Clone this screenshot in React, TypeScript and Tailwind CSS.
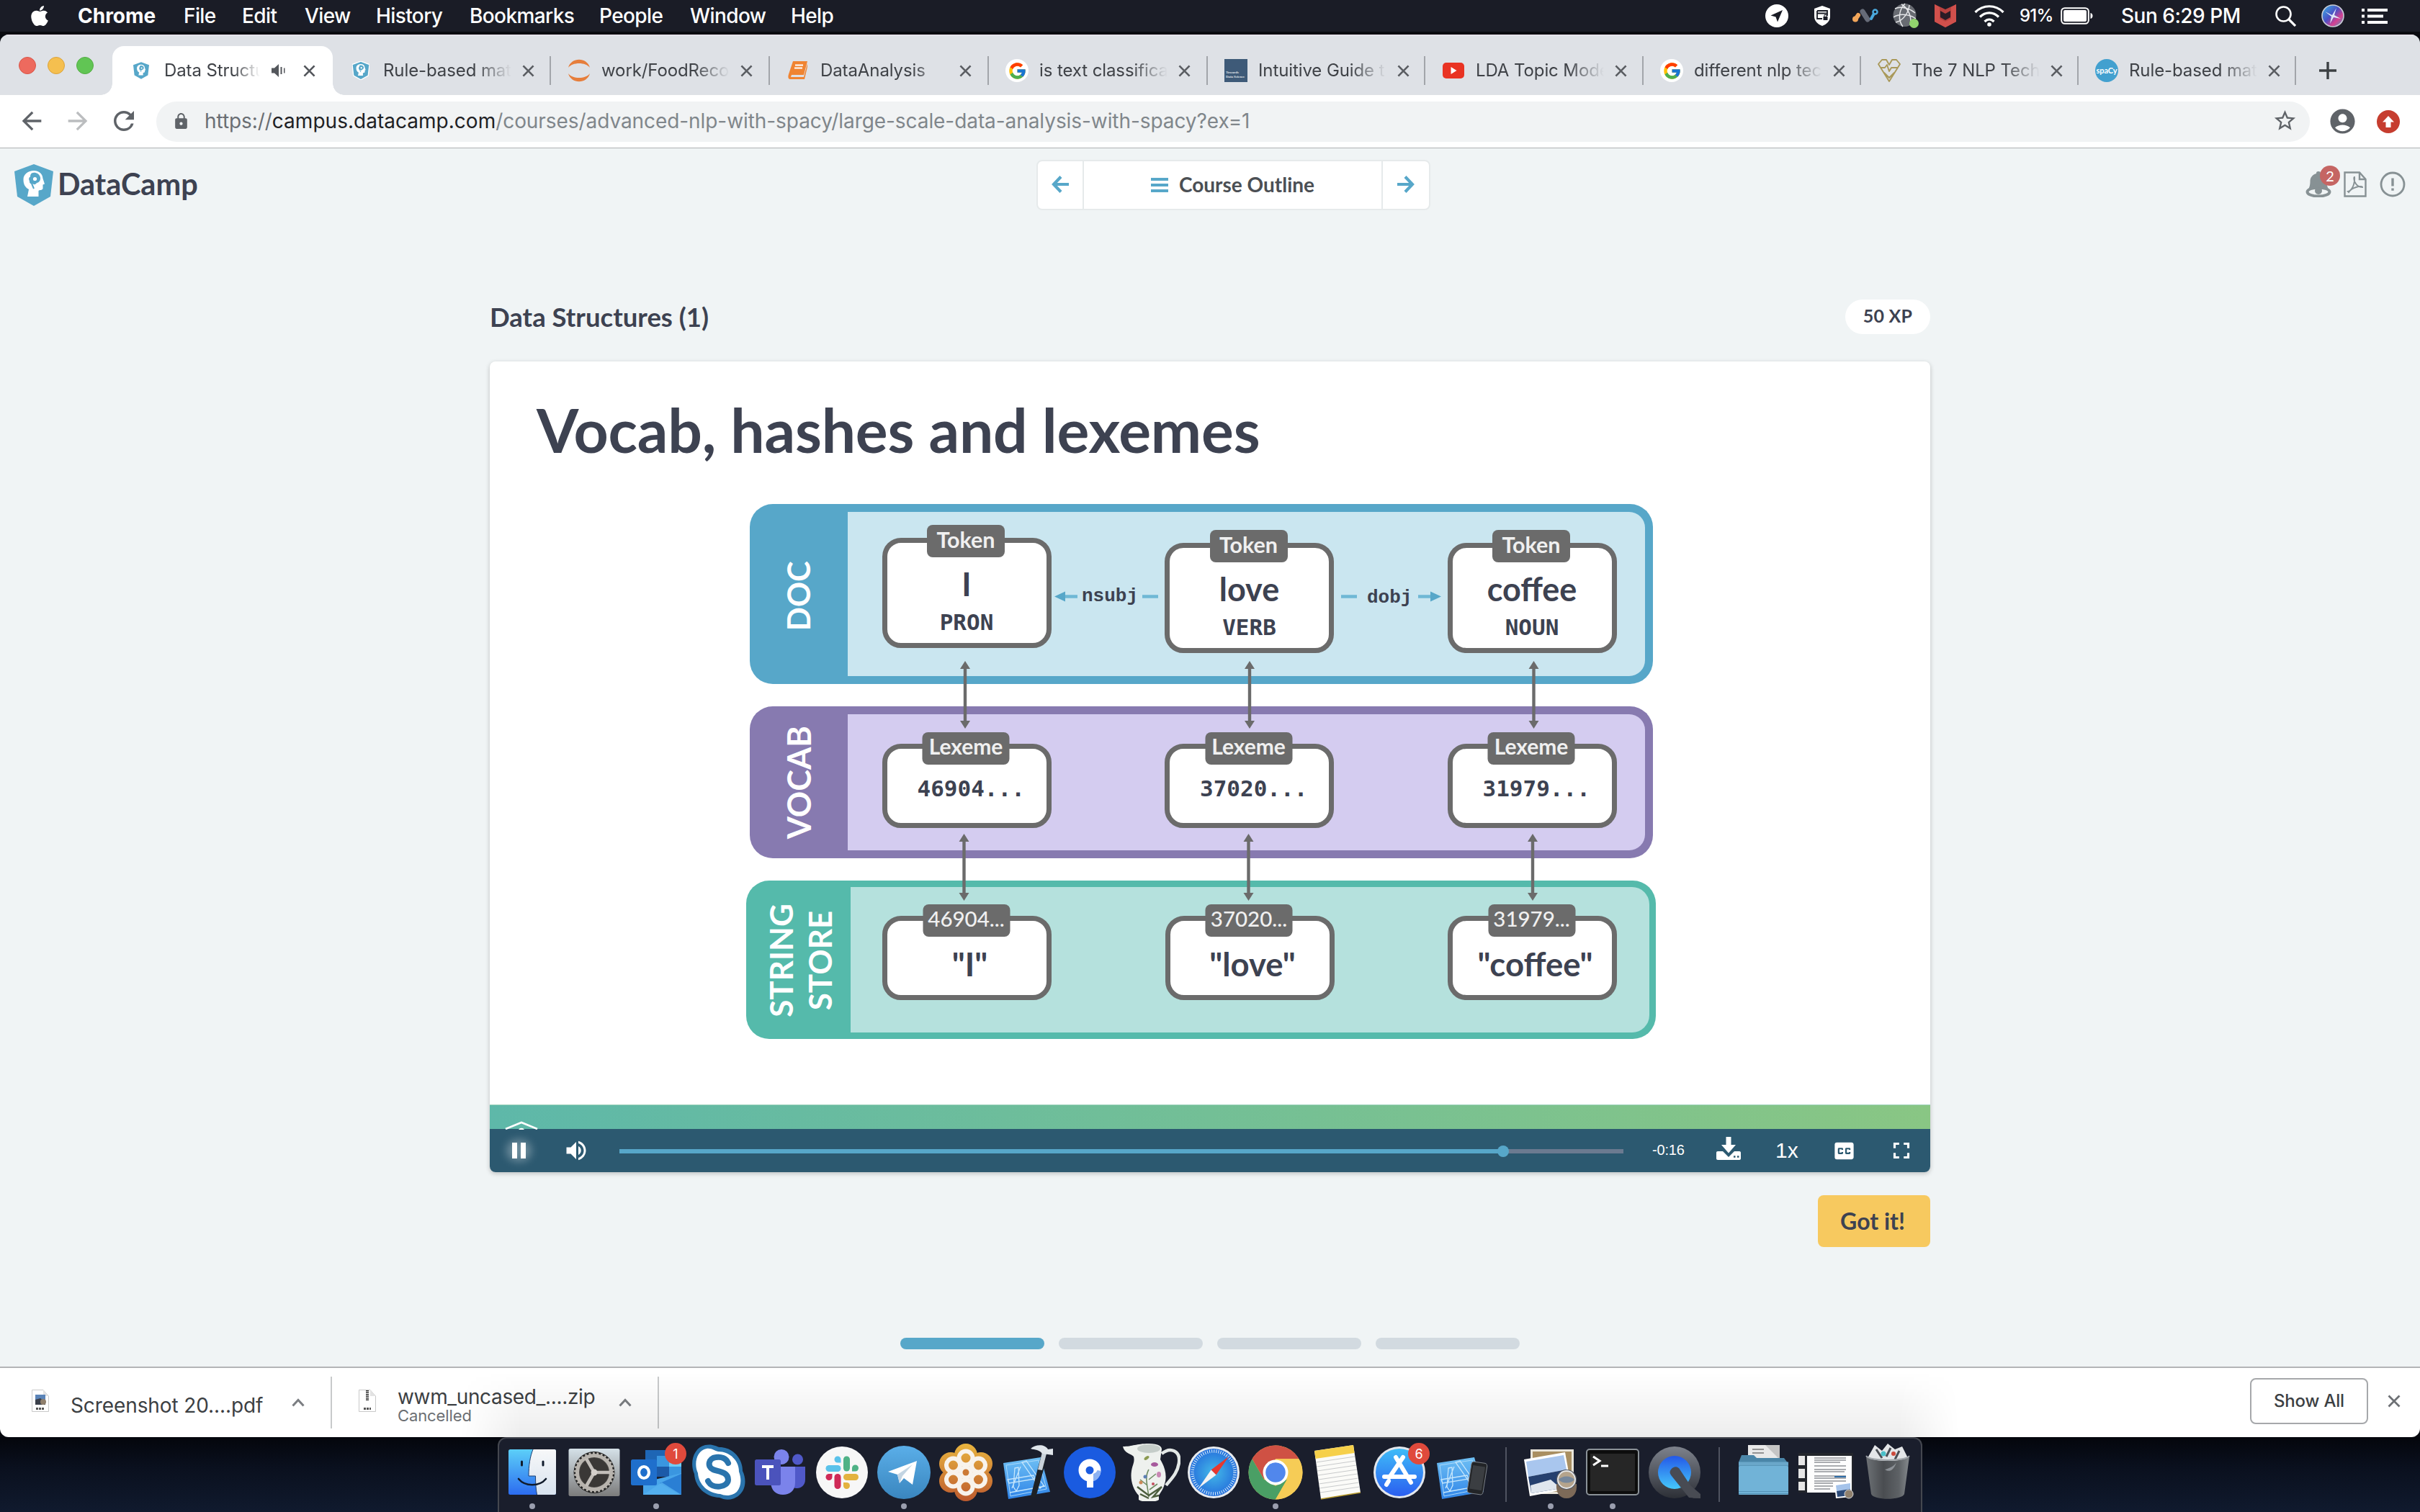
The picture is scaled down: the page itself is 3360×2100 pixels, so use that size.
import type { ReactNode } from "react";
import { FaApple } from "react-icons/fa";
import { FcGoogle } from "react-icons/fc";
import {
  MdAccountCircle,
  MdArrowBack,
  MdArrowForward,
  MdClosedCaption,
  MdFullscreen,
  MdLock,
  MdRefresh,
  MdStarBorder,
  MdVolumeUp,
} from "react-icons/md";

/* ---------- shared marks ---------- */

function Shield({ className, outline = false }: { className: string; outline?: boolean }) {
  return (
    <svg viewBox="0 0 54 58" className={className}>
      <path
        d="M27 0 54 10 50 45 27 58 4 45 0 10Z"
        fill="#57a7c9"
        stroke={outline ? "#ffffff" : "none"}
        strokeWidth={outline ? 3 : 0}
      />
      <path
        d="M18 45 20 35C14 32 12.500 27 12.500 21 12.500 14 19 9 27 9 34 9 39 13 39.500 20L42 27.500 39.500 28.500 39.500 34C38.500 36.500 35 35.500 33.500 37L33.500 45Z"
        fill="#fff"
      />
      <path
        d="M24 12.500c5-2 11 1 12 6 .6 4-2 7-5 7.500-1 2-3.500 3-5 1.500-3 .5-5.500-1-5-4-1.500-2-1-5 1-6 0-2 .5-4 2-5Z"
        fill="#57a7c9"
      />
      <circle cx="28.500" cy="20.500" r="2.600" fill="#fff" />
      <path d="M24 27 27 34" stroke="#57a7c9" strokeWidth="2" />
    </svg>
  );
}

function Cross({ className }: { className: string }) {
  return (
    <svg viewBox="0 0 18 18" className={className} fill="none" stroke="currentColor" strokeWidth="2.800">
      <path d="M1.500 1.500 16.500 16.500M16.500 1.500 1.500 16.500" />
    </svg>
  );
}

/* ---------- menu bar ---------- */

function MenuBar() {
  return (
    <header className="flex h-12 items-center border-b-4 border-[#0a0b10] bg-[#1a1c26] text-[28px] font-medium tracking-[-0.6px] whitespace-nowrap text-white">
      <FaApple className="ml-[39px] mr-[37px] size-8 shrink-0" />
      <nav className="flex">
        <span className="w-[147px] font-bold tracking-normal">Chrome</span>
        <span className="w-[81px]">File</span>
        <span className="w-[87px]">Edit</span>
        <span className="w-[99px]">View</span>
        <span className="w-[130px]">History</span>
        <span className="w-[180px]">Bookmarks</span>
        <span className="w-[126px]">People</span>
        <span className="w-[140px]">Window</span>
        <span>Help</span>
      </nav>
      <div className="ml-auto flex items-center pr-[45px]">
        <svg viewBox="0 0 32 32" className="size-8">
          <circle cx="16" cy="16" r="16" fill="#fff" />
          <path d="M24 8 7.500 15.500 14.500 17.500 17 24.500Z" fill="#1a1c26" />
        </svg>
        <svg viewBox="0 0 24 28" className="ml-[35px] h-7 w-6">
          <path d="M12 0 23 4V15C23 21 18 26 12 28 6 26 1 21 1 15V4Z" fill="#fff" />
          <path d="M5 7H19V14M5 7V18H12M5 10.500H19" stroke="#1a1c26" strokeWidth="1.800" fill="none" />
          <rect x="13.500" y="15" width="6" height="5" fill="#1a1c26" />
          <path d="M15 15V12.500H18V15" stroke="#1a1c26" fill="none" />
        </svg>
        <svg viewBox="0 0 36 20" className="ml-[30px] h-5 w-9">
          <path d="M4 15 8 9" stroke="#f2a65a" strokeWidth="6" strokeLinecap="round" />
          <circle cx="4" cy="14.500" r="4" fill="#f2a65a" />
          <path d="M14 4 21 15" stroke="#666b78" strokeWidth="7" strokeLinecap="round" />
          <path d="M26 14 31 5" stroke="#4aa8dc" strokeWidth="4" strokeLinecap="round" />
          <circle cx="31.500" cy="4.500" r="3" fill="#1a1c26" stroke="#4aa8dc" strokeWidth="2.500" />
        </svg>
        <svg viewBox="0 0 36 36" className="ml-5 size-9">
          <circle cx="16.500" cy="17" r="16" fill="#686b72" />
          <g fill="none" stroke="#e6e7ea" strokeWidth="1.500">
            <path d="M3 8C12 4 24 8 31 14M1 20C10 14 24 16 32 22M17 1C8 10 7 24 14 33M12 2C22 8 27 20 24 31M4 27C14 25 22 14 23 3" />
          </g>
          <circle cx="29.500" cy="28.500" r="6.500" fill="#92d36e" />
        </svg>
        <svg viewBox="0 0 32 32" className="ml-[21px] size-8">
          <path d="M1 0 16 7 31 0V24L16 32 1 24Z" fill="#b9423f" />
          <path d="M1 0 8 4V20L16 24 24 20V4L31 0V24L16 32 1 24Z" fill="#d0504c" />
          <path d="M9 9 16 13 23 9V18L16 22 9 18Z" fill="#2a1c26" />
        </svg>
        <svg viewBox="0 0 42 30" className="ml-6 h-[30px] w-[42px]" fill="none" stroke="#fff" strokeWidth="3.200">
          <path d="M1.500 10C12.500-1 29.500-1 40.500 10M8 16.500C15.500 9 26.500 9 34 16.500M14.500 23C18.500 19 23.500 19 27.500 23" />
          <circle cx="21" cy="27" r="2.800" fill="#fff" stroke="none" />
        </svg>
        <span className="ml-[21px] w-[50px] text-[24px] tracking-[-0.8px]">91%</span>
        <svg viewBox="0 0 45 24" className="ml-[7px] h-6 w-[45px]">
          <rect x="1.200" y="1.200" width="37.600" height="21.600" rx="4.500" fill="none" stroke="#fff" strokeWidth="2" />
          <rect x="4" y="4" width="32" height="16" rx="2" fill="#fff" />
          <path d="M41.500 8C45.500 9 45.500 15 41.500 16Z" fill="#fff" />
        </svg>
        <span className="ml-[39px] w-[169px] tracking-[-0.5px]">Sun 6:29 PM</span>
        <svg viewBox="0 0 29 29" className="ml-[45px] size-[29px]" fill="none" stroke="#fff" strokeWidth="2.600">
          <circle cx="11.500" cy="11.500" r="10" />
          <path d="M18.500 18.500 28 28" strokeWidth="3.200" />
        </svg>
        <svg viewBox="0 0 32 32" className="ml-[35px] size-8">
          <defs>
            <linearGradient id="siri" x1="0" y1="0" x2="1" y2="1">
              <stop offset="0" stopColor="#38b8e8" />
              <stop offset=".45" stopColor="#4a4fc4" />
              <stop offset=".7" stopColor="#d6418f" />
              <stop offset="1" stopColor="#2fa9c8" />
            </linearGradient>
          </defs>
          <circle cx="16" cy="16" r="15" fill="url(#siri)" stroke="#c9ccd6" strokeWidth="1.600" />
          <path d="M5 10 15 15 21 5 18 15 27 20 17 18 12 27 14 17Z" fill="#e9f6ff" opacity=".9" />
        </svg>
        <svg viewBox="0 0 36 21" className="ml-6 h-[21px] w-9">
          <path
            d="M0 2H4M8 2H36M0 10.500H4M8 10.500H30M0 19H4M8 19H36"
            stroke="#fff"
            strokeWidth="4"
          />
        </svg>
      </div>
    </header>
  );
}

/* ---------- tab strip ---------- */

const ShieldIcon = <Shield className="h-[26px] w-6" outline />;

const GoogleIcon = (
  <span className="flex size-8 items-center justify-center rounded-full bg-white">
    <FcGoogle className="size-[27px]" />
  </span>
);

const tabs: { title: string; icon: ReactNode; width: string }[] = [
  { title: "Rule-based mat", icon: ShieldIcon, width: "w-[303px]" },
  {
    title: "work/FoodRecom",
    width: "w-[304px]",
    icon: (
      <svg viewBox="0 0 32 32" className="size-8" fill="#e67e3c">
        <path d="M1 12C5-3 27-3 31 12 25 4 7 4 1 12ZM1 20C7 28 25 28 31 20 27 35 5 35 1 20Z" />
      </svg>
    ),
  },
  {
    title: "DataAnalysis",
    width: "w-[304px]",
    icon: (
      <svg viewBox="0 0 28 26" className="h-[26px] w-7">
        <path d="M7 0H27L22 19H5L4 22H22L27 3V8L23 25H3C0 25 0 21 1 18Z" fill="#f08432" />
        <path d="M10 5.500H21M9 9.500H20" stroke="#fff" strokeWidth="1.800" />
      </svg>
    ),
  },
  { title: "is text classificat", icon: GoogleIcon, width: "w-[304px]" },
  {
    title: "Intuitive Guide t",
    width: "w-[302px]",
    icon: (
      <span className="flex size-8 flex-col justify-end bg-[#3e5a78] pb-1 pl-0.5 font-['Liberation_Serif',serif] text-[5px] leading-[6px] font-bold text-white/80">
        <span>Towards</span>
        <span>Data Science</span>
      </span>
    ),
  },
  {
    title: "LDA Topic Mode",
    width: "w-[303px]",
    icon: (
      <svg viewBox="0 0 30 22" className="h-[22px] w-[30px]">
        <rect width="30" height="22" rx="5" fill="#e93323" />
        <path d="M11.500 6 19.500 11 11.500 16Z" fill="#fff" />
      </svg>
    ),
  },
  { title: "different nlp tech", icon: GoogleIcon, width: "w-[302px]" },
  {
    title: "The 7 NLP Techn",
    width: "w-[302px]",
    icon: (
      <svg viewBox="0 0 32 32" className="size-8" fill="none" stroke="#a9995a" strokeWidth="1.900" strokeLinejoin="round">
        <path d="M16 31 1 7 6 1 12 1 16 8 20 1 26 1 31 7ZM4 12H10L13 8 16 17 19 12H28M9 19 16 26 23 19" />
      </svg>
    ),
  },
  {
    title: "Rule-based mat",
    width: "w-[302px]",
    icon: (
      <span className="flex size-8 items-center justify-center rounded-full bg-[#42a0cf] font-['Lato',sans-serif] text-[11px] font-bold text-white">
        spaCy
      </span>
    ),
  },
];

const fade = "[mask-image:linear-gradient(to_right,black_72%,transparent)]";

function TabStrip() {
  return (
    <div className="flex h-[84px] items-end border-t border-[#f3e9f3] bg-[#dee1e6] text-[24px] tracking-[-0.1px] whitespace-nowrap text-[#3f4247]">
      <div className="flex w-[156px] gap-4 self-start pt-[30px] pl-[26px]">
        <span className="size-6 rounded-full border border-[#d95548] bg-[#ed6a5e]" />
        <span className="size-6 rounded-full border border-[#dba33b] bg-[#f5bf4f]" />
        <span className="size-6 rounded-full border border-[#53ad43] bg-[#61c554]" />
      </div>
      <div className="relative flex h-[68px] w-[306px] items-center rounded-t-[16px] bg-white">
        <span className="absolute bottom-0 -left-4 size-4 bg-[radial-gradient(circle_at_0_0,transparent_15.500px,#fff_16px)]" />
        <span className="absolute -right-4 bottom-0 size-4 bg-[radial-gradient(circle_at_100%_0,transparent_15.500px,#fff_16px)]" />
        <span className="ml-6 flex w-8 justify-center">
          <Shield className="h-6 w-[22px]" />
        </span>
        <span className={"ml-4 w-[133px] overflow-hidden " + fade}>Data Structu</span>
        <svg viewBox="0 0 20 18" className="ml-4 h-[18px] w-5 text-[#54575c]" fill="currentColor">
          <path d="M0 5.500H4L10 0V18L4 12.500H0ZM12.500 4H14.500V14H12.500ZM17 5.500H18.500V12.500H17Z" />
        </svg>
        <Cross className="ml-6 size-[17px] text-[#54575c]" />
      </div>
      {tabs.map((t, i) => (
        <div key={i} className={"flex h-[68px] items-center " + t.width}>
          <span className="ml-[23px] flex w-8 shrink-0 justify-center">{t.icon}</span>
          <span className={"ml-[15px] w-[178px] shrink-0 overflow-hidden " + fade}>{t.title}</span>
          <Cross className="ml-[15px] size-[17px] shrink-0 text-[#5b5e63]" />
          <span className="ml-auto h-10 w-0.5 bg-[#a2a5aa]" />
        </div>
      ))}
      <svg viewBox="0 0 24 24" className="mb-[22px] ml-8 size-6" stroke="#3c4043" strokeWidth="3.400">
        <path d="M12 0V24M0 12H24" />
      </svg>
    </div>
  );
}

function Toolbar() {
  return (
    <div className="flex h-[74px] items-center border-b border-[#aeb1b3] bg-white text-[#5f6368]">
      <MdArrowBack className="-mt-px ml-[24px] size-10" />
      <MdArrowForward className="-mt-px ml-6 size-10 text-[#bbbdbf]" />
      <MdRefresh className="-mt-px ml-[23px] size-[42px]" />
      <div className="ml-6 flex h-14 w-[2990px] items-center rounded-full bg-[#f1f3f4] pr-[17px] pl-[22px]">
        <MdLock className="size-[25px]" />
        <span className="-mt-0.5 ml-[20px] text-[28px] tracking-[-0.07px] whitespace-nowrap text-[#80868b]">
          <span className="text-[#6a6e73]">https://</span>
          <span className="tracking-[0.02px] text-[#202124]">campus.datacamp.com</span>
          /courses/advanced-nlp-with-spacy/large-scale-data-analysis-with-spacy?ex=1
        </span>
        <MdStarBorder className="-mt-0.5 ml-auto size-[35px]" />
      </div>
      <MdAccountCircle className="-mt-px ml-[25px] size-[41px]" />
      <svg viewBox="0 0 32 32" className="ml-[27px] size-8">
        <circle cx="16" cy="16" r="16" fill="#c63d2f" />
        <path d="M16 8 24 16.500H19.500V24H12.500V16.500H8Z" fill="#fff" />
      </svg>
    </div>
  );
}

/* ---------- course page ---------- */

function PageHeader() {
  return (
    <div className="flex h-[100px] font-['Lato',sans-serif] font-bold text-[#3d4251]">
      <div className="flex w-[1439px] items-start pt-[22px] pl-5">
        <Shield className="h-[58px] w-[54px]" />
        <span className="ml-[6px] text-[41.500px] leading-[54px]">DataCamp</span>
      </div>
      <div className="mt-4 flex h-[70px] w-[547px] items-stretch rounded-lg border-2 border-[#e6eaeb] bg-white text-[28px] text-[#4b4f54]">
        <div className="flex w-[64px] items-center justify-center border-r-2 border-[#e6eaeb]">
          <svg viewBox="0 0 24 24" className="-mt-0.5 size-6" fill="none" stroke="#57a7c9" strokeWidth="4.200">
            <path d="M13 1.500 3 12 13 22.500M3 12H24" />
          </svg>
        </div>
        <div className="flex flex-1 items-center justify-center">
          <span className="flex w-6 flex-col gap-1">
            <span className="h-1 bg-[#57a7c9]" />
            <span className="h-1 bg-[#57a7c9]" />
            <span className="h-1 bg-[#57a7c9]" />
          </span>
          <span className="-mt-[3px] ml-[15px]">Course Outline</span>
        </div>
        <div className="flex w-[66px] items-center justify-center border-l-2 border-[#e6eaeb]">
          <svg viewBox="0 0 24 24" className="-mt-0.5 size-6" fill="none" stroke="#57a7c9" strokeWidth="4.200">
            <path d="M11 1.500 21 12 11 22.500M21 12H0" />
          </svg>
        </div>
      </div>
      <div className="mt-8 mr-[20px] ml-auto flex h-9 items-center">
        <div className="relative">
          <svg viewBox="0 0 36 36" className="size-9">
            <path
              d="M18 0C15.500 0 15 1 15 3 9 5 6.500 9 6.500 14 6.500 20 5 23 4 25H32C31 23 29.500 20 29.500 14 29.500 9 27 5 21 3 21 1 20.500 0 18 0Z"
              fill="#879194"
            />
            <ellipse cx="18" cy="28.500" rx="15.500" ry="6" fill="none" stroke="#879194" strokeWidth="4" />
            <circle cx="18" cy="27" r="5" fill="#879194" />
          </svg>
          <span className="absolute -top-2 left-[20px] flex size-7 items-center justify-center rounded-full bg-[#c56563] text-[20px] font-normal text-white">
            2
          </span>
        </div>
        <svg viewBox="0 0 32 36" className="ml-[17px] h-9 w-8" fill="none" stroke="#879194" strokeWidth="2.400">
          <path d="M1.500 1.500H22L30.500 11V34.500H1.500Z" />
          <path d="M22 1.500V11H30.500" />
          <path d="M6 28C11 27 16 18 15 8 13 8 15 22 26 22 26 19 11 22 7 29Z" strokeWidth="1.900" />
        </svg>
        <svg viewBox="0 0 36 36" className="ml-[18px] size-9" fill="none" stroke="#879194">
          <circle cx="18" cy="18" r="16" strokeWidth="2.800" />
          <path d="M18 9.500V20.500M18 23.500V26.800" strokeWidth="3.400" />
        </svg>
      </div>
    </div>
  );
}

function Node({
  tag,
  className,
  tagClass,
  children,
}: {
  tag: string;
  className: string;
  tagClass: string;
  children: ReactNode;
}) {
  return (
    <div
      className={
        "relative flex w-[235px] shrink-0 flex-col rounded-[26px] border-[7px] border-[#6b6b6b] bg-white text-[#3d4251] " +
        className
      }
    >
      <span
        className={
          "absolute left-1/2 -ml-px flex -translate-x-1/2 justify-center rounded-lg bg-[#6b6b6b] text-white/90 " + tagClass
        }
      >
        {tag}
      </span>
      {children}
    </div>
  );
}

const tokens = [
  { word: "I", pos: "PRON", offset: "mt-[36px]" },
  { word: "love", pos: "VERB", offset: "mt-[43px]" },
  { word: "coffee", pos: "NOUN", offset: "mt-[43px]" },
];
const hashes = ["46904...", "37020...", "31979..."];
const upperArrows = [1340, 1735, 2129.5];
const lowerArrows = [1338.5, 1733.5, 2128];

function Diagram() {
  return (
    <div className="relative mt-[53px] ml-[356px] flex h-[744px] w-[1263px] flex-col items-center gap-[31px] font-bold">
      <div className="flex h-[250px] w-[1254px] rounded-[32px] bg-[#57a7c9]">
        <div className="flex w-[136px] items-center justify-center pt-1.5">
          <span className="-rotate-90 text-[43.500px] text-white">DOC</span>
        </div>
        <div className="my-[11px] mr-[11px] flex flex-1 gap-[157.500px] rounded-r-[22px] bg-[#cae6f0] pl-[48px]">
          {tokens.map((t) => (
            <Node
              key={t.pos}
              tag="Token"
              className={"h-[153px] items-center pt-[30px] " + t.offset}
              tagClass="-top-[25px] h-[45px] w-[108px] text-[30.500px] leading-[40px]"
            >
              <span className="text-[45px] leading-[54px]">{t.word}</span>
              <span className="mt-1.5 font-['DejaVu_Sans_Mono',monospace] text-[31px] leading-[40px]">{t.pos}</span>
            </Node>
          ))}
        </div>
      </div>

      <div className="flex h-[211px] w-[1254px] rounded-[32px] bg-[#877ab0]">
        <div className="flex w-[136px] items-center justify-center pl-0.5">
          <span className="-rotate-90 text-[45px] text-white">VOCAB</span>
        </div>
        <div className="my-[11px] mr-[11px] flex flex-1 gap-[157.500px] rounded-r-[22px] bg-[#d4ccf0] pl-[48px]">
          {hashes.map((h) => (
            <Node
              key={h}
              tag="Lexeme"
              className="mt-[41px] h-[117px] pt-[35px] pl-[42px]"
              tagClass="-top-[23px] h-[45px] w-[121px] text-[30px] leading-[39px]"
            >
              <span className="font-['DejaVu_Sans_Mono',monospace] text-[31px] leading-[40px]">{h}</span>
            </Node>
          ))}
        </div>
      </div>

      <div className="flex h-[220px] w-[1263px] rounded-[32px] bg-[#55baab]">
        <div className="flex w-[145px] items-center justify-center pt-0.5 pl-1">
          <span className="-rotate-90 text-center text-[44px] leading-[54px] text-white">
            STRING
            <br />
            STORE
          </span>
        </div>
        <div className="my-[9px] mr-[9px] flex flex-1 gap-[157.500px] rounded-r-[24px] bg-[#b5e1dd] pl-[44px]">
          {hashes.map((h, i) => (
            <Node
              key={h}
              tag={h}
              className="mt-[40px] h-[117px] items-center pt-[33px] pl-2"
              tagClass="-top-[23px] h-[45px] w-[121px] text-[29.500px] leading-[39px] font-medium"
            >
              <span className="text-[45.500px] leading-[54px]">{'"' + tokens[i].word + '"'}</span>
            </Node>
          ))}
        </div>
      </div>

      <svg viewBox="1036 699 1263 744" className="absolute inset-0 h-[744px] w-[1263px]">
        <g stroke="#6b6b6b" strokeWidth="4.400">
          {upperArrows.map((x) => (
            <path key={x} d={`M${x} 926V1002`} />
          ))}
          {lowerArrows.map((x) => (
            <path key={x} d={`M${x} 1166V1241`} />
          ))}
        </g>
        <g fill="#6b6b6b">
          {upperArrows.map((x) => (
            <path key={x} d={`M${x} 917l7 11h-14ZM${x} 1011l7 -11h-14Z`} />
          ))}
          {lowerArrows.map((x) => (
            <path key={x} d={`M${x} 1157l7 11h-14ZM${x} 1250l7 -11h-14Z`} />
          ))}
        </g>
        <path
          d="M1475 827.500H1496M1586 827.500H1608M1862 827.500H1884M1969 827.500H1990"
          stroke="#6fb8d5"
          strokeWidth="4.500"
        />
        <path d="M1464 827.500 1479 820.500V834.500ZM2001 827.500 1986 820.500V834.500Z" fill="#57a7c9" />
      </svg>
      <span className="absolute top-[111px] left-[466px] font-['Liberation_Mono',monospace] text-[26px] leading-[34px]">
        nsubj
      </span>
      <span className="absolute top-[113px] left-[862px] font-['Liberation_Mono',monospace] text-[26px] leading-[34px]">
        dobj
      </span>
    </div>
  );
}

function VideoCard() {
  return (
    <div className="mt-[38px] h-[1126px] overflow-hidden rounded-lg bg-white shadow-[0_2px_6px_rgba(0,0,0,0.22)]">
      <div className="h-[1032px] pt-[45px]">
        <h1 className="pl-[65px] text-[84px] leading-[100px] font-bold tracking-[-0.2px]">Vocab, hashes and lexemes</h1>
        <Diagram />
      </div>
      <div className="h-[34px] border-t border-[#9fd3bd] bg-[linear-gradient(90deg,#5eb8a9,#73bf96_50%,#89c684)]">
        <svg viewBox="0 0 46 12" className="mt-[22px] ml-[21px] h-[12px] w-[46px]" fill="none" stroke="#fff" strokeWidth="2.600">
          <path d="M1 11 23 2 45 11M20 13C21 10.500 25 10.500 26 13" />
        </svg>
      </div>
      <div className="flex h-[60px] items-center bg-[#2c5970] font-['Liberation_Sans',sans-serif] text-white">
        <span className="relative ml-[31px] flex h-[22px] gap-[5px]">
          <span className="absolute -inset-x-2 -inset-y-1 rounded-full bg-white/30 blur-[6px]" />
          <span className="relative w-[7px] bg-white" />
          <span className="relative w-[7px] bg-white" />
        </span>
        <MdVolumeUp className="ml-[52px] size-[36px]" />
        <div className="relative mt-0.5 ml-[42px] flex h-1.5 w-[1394px]">
          <span className="w-[1227px] bg-[#57a7c9]" />
          <span className="flex-1 bg-[#6b7a90]" />
          <span className="absolute -top-[5px] left-[1219px] size-4 rounded-full bg-[#57a7c9]" />
        </div>
        <span className="-mt-0.5 ml-[40px] w-[46px] text-[20px] tracking-[-0.2px]">-0:16</span>
        <svg viewBox="0 0 34 32" className="-mt-1.5 ml-[43px] h-8 w-[34px]" fill="#fff">
          <path d="M13.500 0H20.500V11H27L17 22.500 7 11H13.500Z" />
          <path d="M2 20H9L17 28 25 20H32C33.200 20 34 20.800 34 22V30C34 31.200 33.200 32 32 32H2C.8 32 0 31.200 0 30V22C0 20.800.8 20 2 20Z" />
          <path d="M24 27.500H26.500M29 27.500H31.500" stroke="#2c5970" strokeWidth="2.500" />
        </svg>
        <span className="-mt-0.5 ml-[48px] w-8 text-[30px]">1x</span>
        <MdClosedCaption className="ml-[46px] size-[35px]" />
        <MdFullscreen className="ml-[43px] size-[38px]" />
      </div>
    </div>
  );
}

function CoursePage() {
  return (
    <main className="h-[1692px] overflow-hidden bg-[#f0f4f5]">
      <PageHeader />
      <div className="mx-auto mt-[110px] w-[2000px] font-['Lato',sans-serif] text-[#3d4251]">
        <div className="flex h-12 items-center justify-between font-bold">
          <h2 className="text-[36.500px]">Data Structures (1)</h2>
          <span className="flex h-12 w-[118px] items-center justify-center rounded-full bg-white pb-0.5 text-[25px] tracking-[0.2px]">
            50 XP
          </span>
        </div>
        <VideoCard />
        <div className="mt-8 flex justify-end">
          <button className="h-[72px] w-[156px] rounded-lg bg-[#f7c95f] pr-1 text-[32px] font-bold">Got it!</button>
        </div>
        <div className="mt-[126px] flex justify-center gap-5">
          <span className="h-4 w-[200px] rounded-full bg-[#57a7c9]" />
          <span className="h-4 w-[200px] rounded-full bg-[#d2dae0]" />
          <span className="h-4 w-[200px] rounded-full bg-[#d2dae0]" />
          <span className="h-4 w-[200px] rounded-full bg-[#d2dae0]" />
        </div>
      </div>
    </main>
  );
}

/* ---------- downloads ---------- */

function Caret({ className }: { className: string }) {
  return (
    <svg viewBox="0 0 18 12" className={className} fill="none" stroke="#7b7e82" strokeWidth="3">
      <path d="M1.500 10.500 9 2.500 16.500 10.500" />
    </svg>
  );
}

function DownloadBar() {
  return (
    <footer className="relative flex h-[98px] items-center border-t-2 border-[#b3b4b6] bg-white text-[28px] whitespace-nowrap text-[#3c4043]">
      <div className="absolute bottom-0 left-[640px] h-[90px] w-[2080px] bg-[linear-gradient(to_bottom,transparent,rgba(0,0,0,0.07))] [mask-image:linear-gradient(to_right,transparent,black_4%,black_96%,transparent)]" />
      <div className="flex h-[72px] w-[461px] items-center border-r-2 border-[#c8cacb] pl-[44px]">
        <svg viewBox="0 0 24 31" className="-mt-1.5 h-[31px] w-6">
          <path d="M.5.500H16L23.500 9V30.500H.5Z" fill="#fff" stroke="#c9c9c9" />
          <path d="M16 .5V9H23.500Z" fill="#e3e3e3" />
          <rect x="5" y="7" width="14" height="14" fill="#5b84b8" />
          <path d="M5 14 12 12 19 17V21H5Z" fill="#3a3f4a" />
          <circle cx="16" cy="17" r="4" fill="#8f7f6c" />
          <path d="M6 26.500H18" stroke="#555" strokeWidth="3" strokeDasharray="3 1" />
        </svg>
        <span className="mt-2 ml-[30px] w-[270px] tracking-[-0.1px]">Screenshot 20....pdf</span>
        <Caret className="ml-[37px] h-3 w-[18px]" />
      </div>
      <div className="flex h-[72px] w-[454px] items-center border-r-2 border-[#c8cacb] pl-[37px]">
        <svg viewBox="0 0 24 31" className="-mt-1.5 h-[31px] w-6">
          <path d="M.5.500H16L23.500 9V30.500H.5Z" fill="#fff" stroke="#c9c9c9" />
          <path d="M16 .5V9H23.500Z" fill="#e3e3e3" />
          <path d="M12 1V16" stroke="#333" strokeWidth="4" strokeDasharray="1.500 1" />
          <path d="M7 26.500H17" stroke="#555" strokeWidth="3" strokeDasharray="3 1" />
        </svg>
        <span className="mt-2 ml-[30px] flex w-[278px] flex-col">
          <span className="leading-7 tracking-[-0.35px]">wwm_uncased_....zip</span>
          <span className="text-[22px] leading-6 tracking-[-0.1px] text-[#6c6f73]">Cancelled</span>
        </span>
        <Caret className="ml-[29px] h-3 w-[18px]" />
      </div>
      <button className="-mt-1 ml-auto h-[64px] w-[164px] rounded-lg border-2 border-[#a6a8ab] text-[24px] font-medium tracking-[-0.2px]">
        Show All
      </button>
      <Cross className="-mt-1 mr-[27px] ml-[27px] size-[18px] text-[#6d7074]" />
    </footer>
  );
}

/* ---------- dock ---------- */

const Blueprint = (
  <g>
    <path d="M6 27 58 19 71 67 13 77Z" fill="url(#bp)" />
    <path d="M10 30 55 23 66 63 16 73Z" fill="none" stroke="#a9d8fa" strokeWidth="1" />
    <g fill="none" stroke="#c5e6fc" strokeWidth="1.300">
      <path d="M32 26 38 24 62 58 57 62ZM22 34 27 33 28 58 24 66 20 60ZM12 50 48 44 50 49 14 55ZM30 32 18 62M15 68 64 59" />
    </g>
  </g>
);

const finder = (
  <>
    <rect x="7" y="8" width="66" height="63" rx="2.500" fill="url(#fl)" />
    <path d="M41 8H70.500A2.500 2.500 0 0 1 73 10.500V68.500A2.500 2.500 0 0 1 70.500 71H46.500C45 63 44.500 55 44.500 45H35C35 30 37 18 41 8Z" fill="url(#fr)" />
    <path d="M41 8C37 18 35 30 35 45H44.500C44.500 55 45 63 46.500 71" fill="none" stroke="#1c3f73" strokeWidth="1" />
    <path d="M25.500 25V30M55 25V30" stroke="#111c2c" strokeWidth="3" strokeLinecap="round" />
    <path d="M21 49C30 60 50 60 59 49" fill="none" stroke="#111c2c" strokeWidth="2.600" strokeLinecap="round" />
  </>
);

const settings = (
  <>
    <rect x="4.500" y="7" width="71" height="66" rx="2.500" fill="url(#st)" />
    <ellipse cx="40" cy="40" rx="28.500" ry="29" fill="#222" />
    <circle cx="40" cy="40" r="23.500" fill="#4a4846" stroke="#b8b4ae" strokeWidth="5" />
    <circle cx="40" cy="40" r="26.500" fill="none" stroke="#b8b4ae" strokeWidth="3" strokeDasharray="2.700 2.850" />
    <circle cx="40" cy="40" r="20" fill="#3a3836" />
    <path d="M40 40H62M40 40 29 21M40 40 29 59" stroke="#c2beb9" strokeWidth="4.500" />
    <circle cx="40" cy="40" r="4.500" fill="#d4d0cb" />
  </>
);

const outlook = (
  <>
    <path d="M25 9H58V36H25Z" fill="#1e66b5" />
    <path d="M41 17H75V46H41Z" fill="#3a96e0" />
    <path d="M58 17H75V32H58Z" fill="#6fcdf6" />
    <path d="M25 32H58V46H25Z" fill="#1c5aa8" />
    <path d="M22 71V54L75 41V69C75 70.500 74 71 73 71Z" fill="#49a6ea" />
    <path d="M75 42V71H73L45 55Z" fill="#2a7fd4" />
    <path d="M22 71 48 54 75 71Z" fill="#56b2ef" opacity=".8" />
    <rect x="5" y="22" width="36" height="36" rx="2.500" fill="#1f6fcc" />
    <ellipse cx="23" cy="40" rx="7" ry="8" fill="none" stroke="#fff" strokeWidth="4.200" />
  </>
);

const skype = (
  <>
    <path d="M22 2C32 0 38 4 42 5 60 5 74 20 74 38 80 50 78 64 70 71 62 79 50 79 42 75 22 74 8 60 7 42 0 26 6 6 22 2Z" fill="#2a74ad" />
    <path d="M24 7C31 6 35 10 40 11 56 11 69 23 69 39 73 50 72 60 66 67 59 73 50 73 43 70 26 69 13 57 12 41 6 28 10 10 24 7Z" fill="#fff" />
    <path d="M54 27C51 20 44 18 37 19 27 20 24 32 33 36 40 39 54 39 54 50 54 61 32 64 26 52" fill="none" stroke="#2a74ad" strokeWidth="8" strokeLinecap="round" />
  </>
);

const teams = (
  <>
    <circle cx="42" cy="18.500" r="10.500" fill="#7b83eb" />
    <circle cx="64.500" cy="22" r="7.500" fill="#5059c9" />
    <path d="M58 32H75V50C75 58 69 62 64 62S56 60 56 56Z" fill="#5059c9" />
    <path d="M27 32H61V54C61 66 53 71 44 71S28 66 27 54Z" fill="#7b83eb" />
    <rect x="5" y="22" width="36" height="36" rx="2.500" fill="#4b53bc" />
    <path d="M15 32H31M23 32V50" stroke="#fff" strokeWidth="4" />
  </>
);

const slack = (
  <>
    <circle cx="40" cy="40" r="36" fill="#f7f7f7" />
    <g strokeWidth="9" strokeLinecap="round">
      <path d="M22 34.500H34" stroke="#5ac2ea" />
      <path d="M46.500 22V34" stroke="#4fb286" />
      <path d="M46.500 46.500H58.500" stroke="#e3b23f" />
      <path d="M34 46.500V58.500" stroke="#cf2a57" />
    </g>
    <path d="M38.500 26.500H34A4.500 4.500 0 1 1 38.500 22Z" fill="#5ac2ea" />
    <path d="M54 38.500V34A4.500 4.500 0 1 1 58.500 38.500Z" fill="#4fb286" />
    <path d="M42 54H46.500A4.500 4.500 0 1 1 42 58.500Z" fill="#e3b23f" />
    <path d="M26.500 42V46.500A4.500 4.500 0 1 1 22 42Z" fill="#cf2a57" />
  </>
);

const telegram = (
  <>
    <circle cx="40" cy="40" r="37" fill="url(#tg)" />
    <path d="M18 39 58 24 52 57 40 48 34 55 31 43Z" fill="#fff" />
    <path d="M31 43 52 29 38 45 34 55Z" fill="#c3d5e3" />
  </>
);

const gotomeeting = (
  <>
    <g fill="url(#gt)">
      <circle cx="40" cy="40" r="28" />
      <circle cx="40" cy="16" r="16" />
      <circle cx="40" cy="64" r="16" />
      <circle cx="19" cy="28" r="16" />
      <circle cx="61" cy="28" r="16" />
      <circle cx="19" cy="52" r="16" />
      <circle cx="61" cy="52" r="16" />
    </g>
    <g fill="none" stroke="#f8f3ec" strokeWidth="6">
      <circle cx="40" cy="20" r="9.500" />
      <circle cx="40" cy="60" r="9.500" />
      <circle cx="22.500" cy="30" r="9.500" />
      <circle cx="57.500" cy="30" r="9.500" />
      <circle cx="22.500" cy="50" r="9.500" />
      <circle cx="57.500" cy="50" r="9.500" />
    </g>
    <circle cx="40" cy="40" r="10" fill="#f8f3ec" />
    <circle cx="40" cy="40" r="4.500" fill="#cc7a35" />
  </>
);

const xcode = (
  <>
    {Blueprint}
    <path d="M60 12 54 34 44 74 51 75 62 36 66 14Z" fill="#1d2126" />
    <path d="M60 12 54 36 60 37 66 14Z" fill="#c9d2da" />
    <path d="M44 7C50 1 64 0 68 8L75 7V16L68 15 60 14C56 8 50 9 44 7Z" fill="#dfe5ea" />
  </>
);

const sourcetree = (
  <>
    <circle cx="40" cy="40" r="36" fill="#1a5be0" />
    <circle cx="40" cy="37" r="10.500" fill="none" stroke="#fff" strokeWidth="10" />
    <path d="M36 46H45V61H36Z" fill="#fff" />
    <path d="M55.500 38C55 46 50 51 45 52V42C48 41 50 39 50.500 37Z" fill="#8db2f2" />
  </>
);

const pitcher = (
  <>
    <path d="M54 14C66 4 80 10 78 26 76 42 66 50 60 58" fill="none" stroke="#e3e8e6" strokeWidth="4.500" />
    <path d="M0 4C14 4 18 0 36 0 50 0 54 4 54 8L52 22C58 32 62 44 58 56 56 64 52 68 50 72V78C44 82 28 82 22 78L22 72C14 64 10 50 12 38 13 30 17 26 15 18 12 14 2 14 0 4Z" fill="#eef1ee" />
    <ellipse cx="36" cy="7" rx="16" ry="6" fill="#c5cdc9" />
    <path d="M36 36C30 46 34 58 36 74M36 50 46 42M34 58 24 50M37 64 48 56" stroke="#6f8c62" strokeWidth="1.600" fill="none" />
    <ellipse cx="44" cy="29" rx="5" ry="3" fill="#a65a9c" />
    <ellipse cx="50" cy="43" rx="3" ry="4" fill="#c987b4" />
    <ellipse cx="33" cy="20" rx="4" ry="2" fill="#8c9b52" transform="rotate(-35 33 20)" />
    <circle cx="31" cy="46" r="2.500" fill="#5d80b4" />
    <circle cx="25" cy="54" r="2.500" fill="#cc8a58" />
    <circle cx="42" cy="56" r="2" fill="#c24f5e" />
    <path d="M20 60 36 72 54 60 42 74 50 72M24 70 36 76" stroke="#4c5e3e" strokeWidth="2.400" fill="none" />
  </>
);

const safari = (
  <>
    <circle cx="40" cy="40" r="36" fill="#e8ebee" />
    <circle cx="40" cy="40" r="33" fill="url(#sf)" />
    <circle cx="40" cy="40" r="29.500" fill="none" stroke="#dff1fc" strokeWidth="4.500" strokeDasharray="1 2.090" />
    <path d="M61 18 43.500 43.500 36.500 36.500Z" fill="#e8372e" />
    <path d="M19 62 36.500 36.500 43.500 43.500Z" fill="#f3f3f3" />
  </>
);

const chrome = (
  <>
    <circle cx="40" cy="40" r="37.500" fill="#f6cc56" />
    <path d="M7.500 21.300A37.500 37.500 0 0 1 72.500 21.300H40L23.800 49.400Z" fill="#cf5144" />
    <path d="M7.500 21.300A37.500 37.500 0 0 0 40 77.500L56.200 49.400 40 58.700 23.800 49.400Z" fill="#4a9f65" />
    <path d="M40 21.300H72.500A37.500 37.500 0 0 1 40 77.500L56.200 49.400Z" fill="#f6cc56" />
    <circle cx="40" cy="40" r="17.500" fill="#fff" />
    <circle cx="40" cy="40" r="13.800" fill="#5187ec" />
  </>
);

const notes = (
  <>
    <path d="M8 10 62 2 72 68 17 77Z" fill="#fbfbf8" />
    <path d="M8 10 62 2 63.500 13 9.500 21Z" fill="#f6d04a" />
    <path d="M10 26 64 18M11 32 65 24M12 38 66 30M13 44 67 36M13.500 50 68 42M14 56 69 48M15 62 70 54M16 68 71 60" stroke="#c8cacb" strokeWidth="1" />
    <path d="M17 77 72 68" stroke="#b79a2c" strokeWidth="1.500" />
  </>
);

const appstore = (
  <>
    <circle cx="40" cy="40" r="36" fill="#e3e7ec" />
    <circle cx="40" cy="40" r="33" fill="url(#as)" />
    <g stroke="#fff" strokeWidth="6" strokeLinecap="round">
      <path d="M45 19 26 47M35 19 56 54M19 46H61M25 52 22 57" />
    </g>
  </>
);

const simulator = (
  <>
    {Blueprint}
    <rect x="51" y="26" width="22" height="44" rx="4" fill="#222427" stroke="#7b8088" strokeWidth="1" transform="rotate(9 62 48)" />
    <rect x="53.500" y="31" width="17" height="33" fill="#3b3e42" transform="rotate(9 62 48)" />
  </>
);

const preview = (
  <>
    <path d="M12 8H72V70H12Z" fill="#e9e5da" />
    <path d="M15 11H69V67H15Z" fill="#a98f62" />
    <path d="M3 22 60 12 69 62 11 73Z" fill="#fff" />
    <path d="M6 25 58 16 62 36 9 46Z" fill="#a9c6ee" />
    <path d="M9 46 62 36 66 60 13 69Z" fill="#25406f" />
    <path d="M12 58 40 50 54 62 13 69Z" fill="#dfe6ee" />
    <path d="M48 56H76C77 68 72 76 62 76S47 68 48 56Z" fill="#7d6a58" />
    <circle cx="62" cy="50" r="14" fill="#585c62" />
    <circle cx="62" cy="50" r="12" fill="#b5a48c" stroke="#e5e7ea" strokeWidth="1.800" />
    <path d="M51 50C56 44 68 44 73 50 68 56 56 56 51 50Z" fill="#77889c" />
  </>
);

const terminal = (
  <>
    <rect x="4" y="8" width="72" height="63" rx="4" fill="#0d0d0d" stroke="#8b9298" strokeWidth="2" />
    <rect x="9" y="14" width="62" height="52" fill="#262626" />
    <path d="M13 18 22 24 13 30M24 31H34" stroke="#fff" strokeWidth="3" fill="none" />
  </>
);

const quicktime = (
  <>
    <path d="M54 52 76 72V76H66L48 60Z" fill="#3a3d44" />
    <circle cx="40" cy="40" r="36" fill="url(#qt)" />
    <circle cx="40" cy="40" r="23" fill="url(#qb)" />
    <path d="M35 36C39 31 45 31 48 37L62 58 76 70V76L60 75 36 45C33 41 33 39 35 36Z" fill="#484b53" />
  </>
);

const folder = (
  <>
    <path d="M18 2H62V30H18Z" fill="#e9e9e9" />
    <path d="M42 2 62 22V2Z" fill="#c5c5c5" />
    <path d="M24 8H40M24 13H40" stroke="#777" strokeWidth="1.500" />
    <path d="M5 71V26L9 16H26L30 20H68L74 28V71Z" fill="#4b86a8" />
    <rect x="5" y="31" width="69" height="40" rx="2" fill="#71b3d7" />
    <path d="M5 28H74" stroke="#6aa7c9" strokeWidth="5" />
    <path d="M5 66.500H74M5 69.500H74" stroke="#5592b5" strokeWidth="1" />
  </>
);

const minimized = (
  <>
    <rect x="2" y="13" width="76" height="55" fill="#23262c" />
    <path d="M2 17H11V30H2ZM2 35H11V48H2ZM2 53H11V65H2Z" fill="#e6e6e6" />
    <rect x="14" y="17" width="62" height="51" fill="#fdfdfd" />
    <path d="M24 20H68M24 23H68M24 26H60M24 31H68M24 36H68M24 39H66M24 45H68M24 48H68M24 52H68M24 55H50M24 59H50M24 63H46" stroke="#8e9196" strokeWidth="1.400" />
    <path d="M52 46H68" stroke="#2f6ea8" strokeWidth="2" />
    <path d="M52 56 76 53 76 74 54 76Z" fill="#fff" />
    <path d="M54 58 74 55V64L55 66Z" fill="#a5c3ea" />
    <path d="M55 66 74 63V72L56 74Z" fill="#2c4a78" />
    <circle cx="72" cy="70" r="6" fill="#8f806d" stroke="#d8dade" />
  </>
);

const trash = (
  <>
    <path d="M12 20 22 2 32 10 40 0 50 8 60 4 68 20 56 26H22Z" fill="#e4e6e8" />
    <path d="M24 8 32 20M44 6 38 18M56 10 50 22" stroke="#4b4f55" strokeWidth="3" />
    <circle cx="34" cy="14" r="3.500" fill="#4cc0c9" />
    <circle cx="48" cy="14" r="3" fill="#cc4a3c" />
    <path d="M10 18C20 26 60 26 70 18L63 70C60 79 20 79 17 70Z" fill="url(#tr)" />
    <path d="M10 17C16 25 64 25 70 17" fill="none" stroke="#a1a6ab" strokeWidth="2" />
    <path d="M36 36C44 34 50 30 52 26 48 38 42 40 36 36Z" fill="#9ba0a6" opacity=".8" />
  </>
);

function DockDefs() {
  const grad = (id: string, from: string, to: string) => (
    <linearGradient id={id} x1="0" y1="0" x2="0" y2="1">
      <stop offset="0" stopColor={from} />
      <stop offset="1" stopColor={to} />
    </linearGradient>
  );
  return (
    <svg className="absolute size-0">
      <defs>
        {grad("fl", "#5ccff8", "#2c6cf0")}
        {grad("fr", "#f7f8f9", "#d8e3ef")}
        {grad("st", "#d5e1e8", "#7c7c7c")}
        {grad("tg", "#5aaee8", "#3a86bf")}
        {grad("as", "#3fbcf8", "#2a5ef0")}
        {grad("bp", "#6fc0f4", "#2f84e8")}
        {grad("qt", "#7d828c", "#2c2f36")}
        {grad("qb", "#2458e8", "#45c8fb")}
        <linearGradient id="tr" x1="0" y1="0" x2="1" y2="0">
          <stop offset="0" stopColor="#6d7175" />
          <stop offset=".4" stopColor="#4a4d51" />
          <stop offset=".75" stopColor="#5d6165" />
          <stop offset="1" stopColor="#85898d" />
        </linearGradient>
        <linearGradient id="gt" gradientUnits="userSpaceOnUse" x1="0" y1="0" x2="0" y2="80">
          <stop offset="0" stopColor="#e9b53f" />
          <stop offset="1" stopColor="#bd5a2e" />
        </linearGradient>
        <radialGradient id="sf">
          <stop offset="0" stopColor="#44b9e8" />
          <stop offset="1" stopColor="#2570dc" />
        </radialGradient>
      </defs>
    </svg>
  );
}

function DockItem({ art, running = false, badge }: { art: ReactNode; running?: boolean; badge?: string }) {
  return (
    <div className="relative flex w-[86px] flex-col items-center pt-[7px]">
      <svg viewBox="0 0 80 80" className="size-20">
        {art}
      </svg>
      {running && <span className="mt-[3px] size-2 rounded-full bg-[#9a9eae]" />}
      {badge && (
        <span className="absolute top-[6px] left-[55px] flex size-[30px] items-center justify-center rounded-full bg-[#e04a3c] text-[18px] text-white">
          {badge}
        </span>
      )}
    </div>
  );
}

function Dock() {
  return (
    <div className="flex h-[104px] justify-center bg-[linear-gradient(to_bottom,#04060c,#0a101e_40%,#101a2e)]">
      <DockDefs />
      <div className="flex w-[1978px] rounded-t-[12px] border-x-2 border-t-2 border-[#44474f] bg-[#1a1e2c] pl-[3px]">
        <DockItem art={finder} running />
        <DockItem art={settings} />
        <DockItem art={outlook} running badge="1" />
        <DockItem art={skype} />
        <DockItem art={teams} />
        <DockItem art={slack} />
        <DockItem art={telegram} running />
        <DockItem art={gotomeeting} />
        <DockItem art={xcode} />
        <DockItem art={sourcetree} />
        <DockItem art={pitcher} />
        <DockItem art={safari} />
        <DockItem art={chrome} running />
        <DockItem art={notes} />
        <DockItem art={appstore} badge="6" />
        <DockItem art={simulator} />
        <span className="mx-[18px] mt-3 h-[76px] w-0.5 bg-[#4f5360]" />
        <DockItem art={preview} running />
        <DockItem art={terminal} running />
        <DockItem art={quicktime} />
        <span className="mx-[18px] mt-3 h-[76px] w-0.5 bg-[#4f5360]" />
        <DockItem art={folder} />
        <DockItem art={minimized} />
        <DockItem art={trash} />
      </div>
    </div>
  );
}

export default function App() {
  return (
    <div className="flex h-[2100px] w-[3360px] flex-col overflow-hidden bg-[#07090f] font-['Inter',sans-serif]">
      <MenuBar />
      <div className="flex h-[1948px] flex-col overflow-hidden rounded-[12px]">
        <TabStrip />
        <Toolbar />
        <CoursePage />
        <DownloadBar />
      </div>
      <Dock />
    </div>
  );
}
